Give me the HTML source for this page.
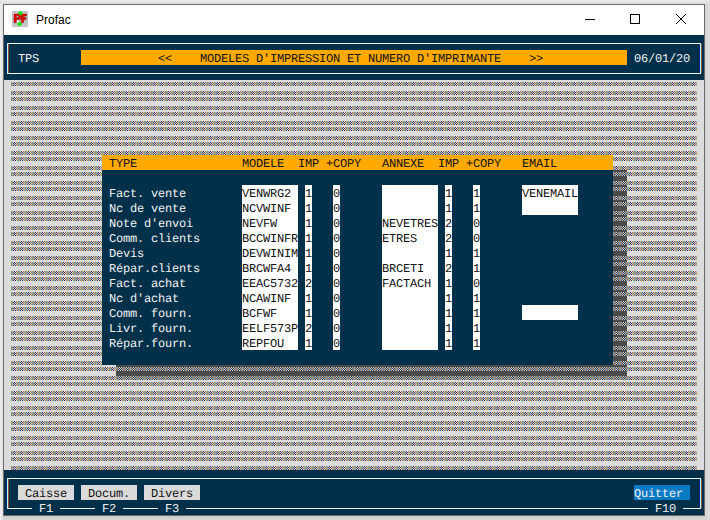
<!DOCTYPE html>
<html><head><meta charset="utf-8"><style>
html,body{margin:0;padding:0;}
body{width:710px;height:520px;position:relative;overflow:hidden;background:#eaeaea;}
.t{position:absolute;font-family:"Liberation Mono",monospace;font-size:12px;line-height:15px;white-space:pre;height:15px;letter-spacing:-0.2px;text-rendering:geometricPrecision;}
</style></head><body>
<div style="position:absolute;left:0;top:0;width:710px;height:4px;background:linear-gradient(to bottom,#eaeaea,#dddddd)"></div>
<div style="position:absolute;left:0;top:4px;width:3px;height:516px;background:linear-gradient(to right,#efefef,#e0e0e0)"></div>
<div style="position:absolute;left:705px;top:4px;width:5px;height:516px;background:linear-gradient(to right,#d2d2d2,#e0e0e0)"></div>
<div style="position:absolute;left:3px;top:516px;width:702px;height:4px;background:linear-gradient(to bottom,#cbcbcb,#d9d9d9)"></div>
<div style="position:absolute;left:3px;top:4px;width:700px;height:510px;border:1px solid #6b6b6b;background:#00304a"></div>
<div style="position:absolute;left:4px;top:5px;width:700px;height:30px;background:#fff"></div>
<svg width="16" height="16" style="position:absolute;left:12px;top:11px">
<rect x="0" y="0" width="16" height="16" fill="#c6c6c6"/>
<ellipse cx="8" cy="7.5" rx="7.5" ry="2.2" fill="none" stroke="#8a8a8a" stroke-width="0.5" opacity="0.7"/>
<path d="M2 3 H7.5 Q9 3 9 4.5 V7 Q9 8.5 7.5 8.5 H4.3 V11.8 H2 Z M4.3 4.8 V6.8 H6.6 V4.8 Z" fill="#f00000" stroke="#700000" stroke-width="0.4"/>
<path d="M9.3 3 H14.6 V5 H11.6 V6.5 H14 V8.4 H11.6 V11.8 H9.3 Z" fill="#f00000" stroke="#700000" stroke-width="0.4"/>
<rect x="5" y="9.5" width="2" height="2" fill="#ffffff"/>
<path d="M8.4 -0.2 L11 2.3 L8.4 4.8 L5.8 2.3 Z" fill="#10e010"/>
<path d="M7.6 10.4 L10.2 12.9 L7.6 15.4 L5 12.9 Z" fill="#10e010"/>
</svg>
<div style="position:absolute;left:36px;top:12px;font-family:'Liberation Sans',sans-serif;font-size:12px;line-height:16px;color:#000">Profac</div>
<svg width="710" height="30" style="position:absolute;left:0;top:5px">
<rect x="585" y="14" width="10" height="1" fill="#000"/>
<rect x="630.5" y="9.5" width="9" height="9" fill="none" stroke="#000" stroke-width="1"/>
<path d="M676 9 L686 19 M686 9 L676 19" stroke="#000" stroke-width="1" fill="none"/>
</svg>
<div style="position:absolute;left:4px;top:80px;width:700px;height:390px;background:#dcdcdc;"></div><svg width="710" height="520" style="position:absolute;left:0;top:0"><defs><pattern id="pl" x="4" y="35" width="7" height="15" patternUnits="userSpaceOnUse"><rect x="0" y="2" width="1" height="1" fill="#d7842a"/><rect x="1" y="2" width="1" height="1" fill="#5aa5e6"/><rect x="2" y="2" width="1" height="1" fill="#eec27a"/><rect x="3" y="2" width="1" height="1" fill="#2c2a86"/><rect x="4" y="2" width="1" height="1" fill="#eef2ee"/><rect x="5" y="2" width="1" height="1" fill="#b8643a"/><rect x="6" y="2" width="1" height="1" fill="#86cbe8"/><rect x="0" y="3" width="1" height="1" fill="#4f9fe6"/><rect x="1" y="3" width="1" height="1" fill="#e29a48"/><rect x="2" y="3" width="1" height="1" fill="#1a5caa"/><rect x="3" y="3" width="1" height="1" fill="#e6e2a2"/><rect x="4" y="3" width="1" height="1" fill="#5a0a6e"/><rect x="5" y="3" width="1" height="1" fill="#a6e6e2"/><rect x="6" y="3" width="1" height="1" fill="#d68838"/><rect x="0" y="4" width="1" height="1" fill="#d7842a"/><rect x="1" y="4" width="1" height="1" fill="#5aa5e6"/><rect x="2" y="4" width="1" height="1" fill="#eec27a"/><rect x="3" y="4" width="1" height="1" fill="#2c2a86"/><rect x="4" y="4" width="1" height="1" fill="#eef2ee"/><rect x="5" y="4" width="1" height="1" fill="#b8643a"/><rect x="6" y="4" width="1" height="1" fill="#86cbe8"/><rect x="0" y="5" width="1" height="1" fill="#4f9fe6"/><rect x="1" y="5" width="1" height="1" fill="#e29a48"/><rect x="2" y="5" width="1" height="1" fill="#1a5caa"/><rect x="3" y="5" width="1" height="1" fill="#e6e2a2"/><rect x="4" y="5" width="1" height="1" fill="#5a0a6e"/><rect x="5" y="5" width="1" height="1" fill="#a6e6e2"/><rect x="6" y="5" width="1" height="1" fill="#d68838"/><rect x="0" y="11" width="1" height="1" fill="#d7842a"/><rect x="1" y="11" width="1" height="1" fill="#5aa5e6"/><rect x="2" y="11" width="1" height="1" fill="#eec27a"/><rect x="3" y="11" width="1" height="1" fill="#2c2a86"/><rect x="4" y="11" width="1" height="1" fill="#eef2ee"/><rect x="5" y="11" width="1" height="1" fill="#b8643a"/><rect x="6" y="11" width="1" height="1" fill="#86cbe8"/><rect x="0" y="12" width="1" height="1" fill="#4f9fe6"/><rect x="1" y="12" width="1" height="1" fill="#e29a48"/><rect x="2" y="12" width="1" height="1" fill="#1a5caa"/><rect x="3" y="12" width="1" height="1" fill="#e6e2a2"/><rect x="4" y="12" width="1" height="1" fill="#5a0a6e"/><rect x="5" y="12" width="1" height="1" fill="#a6e6e2"/><rect x="6" y="12" width="1" height="1" fill="#d68838"/><rect x="0" y="13" width="1" height="1" fill="#d7842a"/><rect x="1" y="13" width="1" height="1" fill="#5aa5e6"/><rect x="2" y="13" width="1" height="1" fill="#eec27a"/><rect x="3" y="13" width="1" height="1" fill="#2c2a86"/><rect x="4" y="13" width="1" height="1" fill="#eef2ee"/><rect x="5" y="13" width="1" height="1" fill="#b8643a"/><rect x="6" y="13" width="1" height="1" fill="#86cbe8"/><rect x="0" y="14" width="1" height="1" fill="#4f9fe6"/><rect x="1" y="14" width="1" height="1" fill="#e29a48"/><rect x="2" y="14" width="1" height="1" fill="#1a5caa"/><rect x="3" y="14" width="1" height="1" fill="#e6e2a2"/><rect x="4" y="14" width="1" height="1" fill="#5a0a6e"/><rect x="5" y="14" width="1" height="1" fill="#a6e6e2"/><rect x="6" y="14" width="1" height="1" fill="#d68838"/></pattern><pattern id="ps" x="4" y="35" width="7" height="15" patternUnits="userSpaceOnUse"><rect x="0" y="2" width="1" height="1" fill="#5aa0d8"/><rect x="1" y="2" width="1" height="1" fill="#c8843a"/><rect x="2" y="2" width="1" height="1" fill="#3a5aa0"/><rect x="3" y="2" width="1" height="1" fill="#d8d8a0"/><rect x="4" y="2" width="1" height="1" fill="#303038"/><rect x="5" y="2" width="1" height="1" fill="#80c0e0"/><rect x="6" y="2" width="1" height="1" fill="#b86a3a"/><rect x="0" y="3" width="1" height="1" fill="#d08a3a"/><rect x="1" y="3" width="1" height="1" fill="#3a7ac0"/><rect x="2" y="3" width="1" height="1" fill="#e0b080"/><rect x="3" y="3" width="1" height="1" fill="#303080"/><rect x="4" y="3" width="1" height="1" fill="#a8d8b0"/><rect x="5" y="3" width="1" height="1" fill="#803838"/><rect x="6" y="3" width="1" height="1" fill="#60a0d8"/><rect x="0" y="4" width="1" height="1" fill="#5aa0d8"/><rect x="1" y="4" width="1" height="1" fill="#c8843a"/><rect x="2" y="4" width="1" height="1" fill="#3a5aa0"/><rect x="3" y="4" width="1" height="1" fill="#d8d8a0"/><rect x="4" y="4" width="1" height="1" fill="#303038"/><rect x="5" y="4" width="1" height="1" fill="#80c0e0"/><rect x="6" y="4" width="1" height="1" fill="#b86a3a"/><rect x="0" y="5" width="1" height="1" fill="#d08a3a"/><rect x="1" y="5" width="1" height="1" fill="#3a7ac0"/><rect x="2" y="5" width="1" height="1" fill="#e0b080"/><rect x="3" y="5" width="1" height="1" fill="#303080"/><rect x="4" y="5" width="1" height="1" fill="#a8d8b0"/><rect x="5" y="5" width="1" height="1" fill="#803838"/><rect x="6" y="5" width="1" height="1" fill="#60a0d8"/><rect x="0" y="11" width="1" height="1" fill="#5aa0d8"/><rect x="1" y="11" width="1" height="1" fill="#c8843a"/><rect x="2" y="11" width="1" height="1" fill="#3a5aa0"/><rect x="3" y="11" width="1" height="1" fill="#d8d8a0"/><rect x="4" y="11" width="1" height="1" fill="#303038"/><rect x="5" y="11" width="1" height="1" fill="#80c0e0"/><rect x="6" y="11" width="1" height="1" fill="#b86a3a"/><rect x="0" y="12" width="1" height="1" fill="#d08a3a"/><rect x="1" y="12" width="1" height="1" fill="#3a7ac0"/><rect x="2" y="12" width="1" height="1" fill="#e0b080"/><rect x="3" y="12" width="1" height="1" fill="#303080"/><rect x="4" y="12" width="1" height="1" fill="#a8d8b0"/><rect x="5" y="12" width="1" height="1" fill="#803838"/><rect x="6" y="12" width="1" height="1" fill="#60a0d8"/><rect x="0" y="13" width="1" height="1" fill="#5aa0d8"/><rect x="1" y="13" width="1" height="1" fill="#c8843a"/><rect x="2" y="13" width="1" height="1" fill="#3a5aa0"/><rect x="3" y="13" width="1" height="1" fill="#d8d8a0"/><rect x="4" y="13" width="1" height="1" fill="#303038"/><rect x="5" y="13" width="1" height="1" fill="#80c0e0"/><rect x="6" y="13" width="1" height="1" fill="#b86a3a"/><rect x="0" y="14" width="1" height="1" fill="#d08a3a"/><rect x="1" y="14" width="1" height="1" fill="#3a7ac0"/><rect x="2" y="14" width="1" height="1" fill="#e0b080"/><rect x="3" y="14" width="1" height="1" fill="#303080"/><rect x="4" y="14" width="1" height="1" fill="#a8d8b0"/><rect x="5" y="14" width="1" height="1" fill="#803838"/><rect x="6" y="14" width="1" height="1" fill="#60a0d8"/></pattern></defs><rect x="11" y="80" width="686" height="390" fill="url(#pl)"/></svg><svg width="710" height="520" style="position:absolute;left:0;top:0"><defs><pattern id="ps2" x="4" y="35" width="7" height="15" patternUnits="userSpaceOnUse"><rect x="0" y="2" width="1" height="1" fill="#5aa0d8"/><rect x="1" y="2" width="1" height="1" fill="#c8843a"/><rect x="2" y="2" width="1" height="1" fill="#3a5aa0"/><rect x="3" y="2" width="1" height="1" fill="#d8d8a0"/><rect x="4" y="2" width="1" height="1" fill="#303038"/><rect x="5" y="2" width="1" height="1" fill="#80c0e0"/><rect x="6" y="2" width="1" height="1" fill="#b86a3a"/><rect x="0" y="3" width="1" height="1" fill="#d08a3a"/><rect x="1" y="3" width="1" height="1" fill="#3a7ac0"/><rect x="2" y="3" width="1" height="1" fill="#e0b080"/><rect x="3" y="3" width="1" height="1" fill="#303080"/><rect x="4" y="3" width="1" height="1" fill="#a8d8b0"/><rect x="5" y="3" width="1" height="1" fill="#803838"/><rect x="6" y="3" width="1" height="1" fill="#60a0d8"/><rect x="0" y="4" width="1" height="1" fill="#5aa0d8"/><rect x="1" y="4" width="1" height="1" fill="#c8843a"/><rect x="2" y="4" width="1" height="1" fill="#3a5aa0"/><rect x="3" y="4" width="1" height="1" fill="#d8d8a0"/><rect x="4" y="4" width="1" height="1" fill="#303038"/><rect x="5" y="4" width="1" height="1" fill="#80c0e0"/><rect x="6" y="4" width="1" height="1" fill="#b86a3a"/><rect x="0" y="5" width="1" height="1" fill="#d08a3a"/><rect x="1" y="5" width="1" height="1" fill="#3a7ac0"/><rect x="2" y="5" width="1" height="1" fill="#e0b080"/><rect x="3" y="5" width="1" height="1" fill="#303080"/><rect x="4" y="5" width="1" height="1" fill="#a8d8b0"/><rect x="5" y="5" width="1" height="1" fill="#803838"/><rect x="6" y="5" width="1" height="1" fill="#60a0d8"/><rect x="0" y="11" width="1" height="1" fill="#5aa0d8"/><rect x="1" y="11" width="1" height="1" fill="#c8843a"/><rect x="2" y="11" width="1" height="1" fill="#3a5aa0"/><rect x="3" y="11" width="1" height="1" fill="#d8d8a0"/><rect x="4" y="11" width="1" height="1" fill="#303038"/><rect x="5" y="11" width="1" height="1" fill="#80c0e0"/><rect x="6" y="11" width="1" height="1" fill="#b86a3a"/><rect x="0" y="12" width="1" height="1" fill="#d08a3a"/><rect x="1" y="12" width="1" height="1" fill="#3a7ac0"/><rect x="2" y="12" width="1" height="1" fill="#e0b080"/><rect x="3" y="12" width="1" height="1" fill="#303080"/><rect x="4" y="12" width="1" height="1" fill="#a8d8b0"/><rect x="5" y="12" width="1" height="1" fill="#803838"/><rect x="6" y="12" width="1" height="1" fill="#60a0d8"/><rect x="0" y="13" width="1" height="1" fill="#5aa0d8"/><rect x="1" y="13" width="1" height="1" fill="#c8843a"/><rect x="2" y="13" width="1" height="1" fill="#3a5aa0"/><rect x="3" y="13" width="1" height="1" fill="#d8d8a0"/><rect x="4" y="13" width="1" height="1" fill="#303038"/><rect x="5" y="13" width="1" height="1" fill="#80c0e0"/><rect x="6" y="13" width="1" height="1" fill="#b86a3a"/><rect x="0" y="14" width="1" height="1" fill="#d08a3a"/><rect x="1" y="14" width="1" height="1" fill="#3a7ac0"/><rect x="2" y="14" width="1" height="1" fill="#e0b080"/><rect x="3" y="14" width="1" height="1" fill="#303080"/><rect x="4" y="14" width="1" height="1" fill="#a8d8b0"/><rect x="5" y="14" width="1" height="1" fill="#803838"/><rect x="6" y="14" width="1" height="1" fill="#60a0d8"/></pattern></defs><rect x="613" y="170" width="14" height="210" fill="#4b4b4b"/><rect x="116" y="365" width="497" height="15" fill="#4b4b4b"/><rect x="613" y="170" width="14" height="210" fill="url(#ps2)"/><rect x="116" y="365" width="497" height="15" fill="url(#ps2)"/></svg><div style="position:absolute;left:102px;top:155px;width:511px;height:15px;background:#ffaa00;"></div><div style="position:absolute;left:102px;top:170px;width:511px;height:195px;background:#00304a;"></div><div style="position:absolute;left:81px;top:50px;width:546px;height:15px;background:#ffaa00;"></div><div style="position:absolute;left:7px;top:43px;width:694px;height:1px;background:#f4f4f4;"></div><div style="position:absolute;left:6px;top:44px;width:1px;height:29px;background:#00288a;"></div><div style="position:absolute;left:8px;top:44px;width:1px;height:29px;background:#9a5040;"></div><div style="position:absolute;left:7px;top:43px;width:1px;height:31px;background:#b4ffea;"></div><div style="position:absolute;left:7px;top:43px;width:1px;height:1px;background:#f4f4f4;"></div><div style="position:absolute;left:7px;top:73px;width:1px;height:1px;background:#f4f4f4;"></div><div style="position:absolute;left:699px;top:44px;width:1px;height:29px;background:#00288a;"></div><div style="position:absolute;left:701px;top:44px;width:1px;height:29px;background:#9a5040;"></div><div style="position:absolute;left:700px;top:43px;width:1px;height:31px;background:#b4ffea;"></div><div style="position:absolute;left:700px;top:43px;width:1px;height:1px;background:#f4f4f4;"></div><div style="position:absolute;left:700px;top:73px;width:1px;height:1px;background:#f4f4f4;"></div><div style="position:absolute;left:7px;top:73px;width:694px;height:1px;background:#f4f4f4;"></div><div class="t" style="left:18px;top:51.5px;color:#f2f2f2">TPS</div><div class="t" style="left:158px;top:51.5px;color:#121212">&lt;&lt;    MODELES D'IMPRESSION ET NUMERO D'IMPRIMANTE    &gt;&gt;</div><div class="t" style="left:634px;top:51.5px;color:#f2f2f2">06/01/20</div><div class="t" style="left:109px;top:156.5px;color:#121212">TYPE</div><div class="t" style="left:242px;top:156.5px;color:#121212">MODELE</div><div class="t" style="left:298px;top:156.5px;color:#121212">IMP</div><div class="t" style="left:326px;top:156.5px;color:#121212">+COPY</div><div class="t" style="left:382px;top:156.5px;color:#121212">ANNEXE</div><div class="t" style="left:438px;top:156.5px;color:#121212">IMP</div><div class="t" style="left:466px;top:156.5px;color:#121212">+COPY</div><div class="t" style="left:522px;top:156.5px;color:#121212">EMAIL</div><div style="position:absolute;left:242px;top:185px;width:56px;height:165px;background:#ffffff;"></div><div style="position:absolute;left:305px;top:185px;width:7px;height:165px;background:#ffffff;"></div><div style="position:absolute;left:333px;top:185px;width:7px;height:165px;background:#ffffff;"></div><div style="position:absolute;left:382px;top:185px;width:56px;height:165px;background:#ffffff;"></div><div style="position:absolute;left:445px;top:185px;width:7px;height:165px;background:#ffffff;"></div><div style="position:absolute;left:473px;top:185px;width:7px;height:165px;background:#ffffff;"></div><div style="position:absolute;left:522px;top:185px;width:56px;height:30px;background:#ffffff;"></div><div style="position:absolute;left:522px;top:305px;width:56px;height:15px;background:#ffffff;"></div><div class="t" style="left:109px;top:186.5px;color:#f2f2f2">Fact. vente</div><div class="t" style="left:242px;top:186.5px;color:#121212">VENWRG2</div><div class="t" style="left:305px;top:186.5px;color:#121212">1</div><div class="t" style="left:333px;top:186.5px;color:#121212">0</div><div class="t" style="left:445px;top:186.5px;color:#121212">1</div><div class="t" style="left:473px;top:186.5px;color:#121212">1</div><div class="t" style="left:522px;top:186.5px;color:#121212">VENEMAIL</div><div class="t" style="left:109px;top:201.5px;color:#f2f2f2">Nc de vente</div><div class="t" style="left:242px;top:201.5px;color:#121212">NCVWINF</div><div class="t" style="left:305px;top:201.5px;color:#121212">1</div><div class="t" style="left:333px;top:201.5px;color:#121212">0</div><div class="t" style="left:445px;top:201.5px;color:#121212">1</div><div class="t" style="left:473px;top:201.5px;color:#121212">1</div><div class="t" style="left:109px;top:216.5px;color:#f2f2f2">Note d'envoi</div><div class="t" style="left:242px;top:216.5px;color:#121212">NEVFW</div><div class="t" style="left:305px;top:216.5px;color:#121212">1</div><div class="t" style="left:333px;top:216.5px;color:#121212">0</div><div class="t" style="left:382px;top:216.5px;color:#121212">NEVETRES</div><div class="t" style="left:445px;top:216.5px;color:#121212">2</div><div class="t" style="left:473px;top:216.5px;color:#121212">0</div><div class="t" style="left:109px;top:231.5px;color:#f2f2f2">Comm. clients</div><div class="t" style="left:242px;top:231.5px;color:#121212">BCCWINFR</div><div class="t" style="left:305px;top:231.5px;color:#121212">1</div><div class="t" style="left:333px;top:231.5px;color:#121212">0</div><div class="t" style="left:382px;top:231.5px;color:#121212">ETRES</div><div class="t" style="left:445px;top:231.5px;color:#121212">2</div><div class="t" style="left:473px;top:231.5px;color:#121212">0</div><div class="t" style="left:109px;top:246.5px;color:#f2f2f2">Devis</div><div class="t" style="left:242px;top:246.5px;color:#121212">DEVWINIM</div><div class="t" style="left:305px;top:246.5px;color:#121212">1</div><div class="t" style="left:333px;top:246.5px;color:#121212">0</div><div class="t" style="left:445px;top:246.5px;color:#121212">1</div><div class="t" style="left:473px;top:246.5px;color:#121212">1</div><div class="t" style="left:109px;top:261.5px;color:#f2f2f2">Répar.clients</div><div class="t" style="left:242px;top:261.5px;color:#121212">BRCWFA4</div><div class="t" style="left:305px;top:261.5px;color:#121212">1</div><div class="t" style="left:333px;top:261.5px;color:#121212">0</div><div class="t" style="left:382px;top:261.5px;color:#121212">BRCETI</div><div class="t" style="left:445px;top:261.5px;color:#121212">2</div><div class="t" style="left:473px;top:261.5px;color:#121212">1</div><div class="t" style="left:109px;top:276.5px;color:#f2f2f2">Fact. achat</div><div class="t" style="left:242px;top:276.5px;color:#121212">EEAC5732</div><div class="t" style="left:305px;top:276.5px;color:#121212">2</div><div class="t" style="left:333px;top:276.5px;color:#121212">0</div><div class="t" style="left:382px;top:276.5px;color:#121212">FACTACH</div><div class="t" style="left:445px;top:276.5px;color:#121212">1</div><div class="t" style="left:473px;top:276.5px;color:#121212">0</div><div class="t" style="left:109px;top:291.5px;color:#f2f2f2">Nc d'achat</div><div class="t" style="left:242px;top:291.5px;color:#121212">NCAWINF</div><div class="t" style="left:305px;top:291.5px;color:#121212">1</div><div class="t" style="left:333px;top:291.5px;color:#121212">0</div><div class="t" style="left:445px;top:291.5px;color:#121212">1</div><div class="t" style="left:473px;top:291.5px;color:#121212">1</div><div class="t" style="left:109px;top:306.5px;color:#f2f2f2">Comm. fourn.</div><div class="t" style="left:242px;top:306.5px;color:#121212">BCFWF</div><div class="t" style="left:305px;top:306.5px;color:#121212">1</div><div class="t" style="left:333px;top:306.5px;color:#121212">0</div><div class="t" style="left:445px;top:306.5px;color:#121212">1</div><div class="t" style="left:473px;top:306.5px;color:#121212">1</div><div class="t" style="left:109px;top:321.5px;color:#f2f2f2">Livr. fourn.</div><div class="t" style="left:242px;top:321.5px;color:#121212">EELF573P</div><div class="t" style="left:305px;top:321.5px;color:#121212">2</div><div class="t" style="left:333px;top:321.5px;color:#121212">0</div><div class="t" style="left:445px;top:321.5px;color:#121212">1</div><div class="t" style="left:473px;top:321.5px;color:#121212">1</div><div class="t" style="left:109px;top:336.5px;color:#f2f2f2">Répar.fourn.</div><div class="t" style="left:242px;top:336.5px;color:#121212">REPFOU</div><div class="t" style="left:305px;top:336.5px;color:#121212">1</div><div class="t" style="left:333px;top:336.5px;color:#121212">0</div><div class="t" style="left:445px;top:336.5px;color:#121212">1</div><div class="t" style="left:473px;top:336.5px;color:#121212">1</div><div style="position:absolute;left:4px;top:470px;width:700px;height:45px;background:#00304a;"></div><div style="position:absolute;left:7px;top:478px;width:694px;height:1px;background:#f4f4f4;"></div><div style="position:absolute;left:6px;top:479px;width:1px;height:29px;background:#00288a;"></div><div style="position:absolute;left:8px;top:479px;width:1px;height:29px;background:#9a5040;"></div><div style="position:absolute;left:7px;top:478px;width:1px;height:31px;background:#b4ffea;"></div><div style="position:absolute;left:7px;top:478px;width:1px;height:1px;background:#f4f4f4;"></div><div style="position:absolute;left:7px;top:508px;width:1px;height:1px;background:#f4f4f4;"></div><div style="position:absolute;left:699px;top:479px;width:1px;height:29px;background:#00288a;"></div><div style="position:absolute;left:701px;top:479px;width:1px;height:29px;background:#9a5040;"></div><div style="position:absolute;left:700px;top:478px;width:1px;height:31px;background:#b4ffea;"></div><div style="position:absolute;left:700px;top:478px;width:1px;height:1px;background:#f4f4f4;"></div><div style="position:absolute;left:700px;top:508px;width:1px;height:1px;background:#f4f4f4;"></div><div style="position:absolute;left:7px;top:508px;width:25px;height:1px;background:#f4f4f4;"></div><div style="position:absolute;left:60px;top:508px;width:35px;height:1px;background:#f4f4f4;"></div><div style="position:absolute;left:123px;top:508px;width:35px;height:1px;background:#f4f4f4;"></div><div style="position:absolute;left:186px;top:508px;width:462px;height:1px;background:#f4f4f4;"></div><div style="position:absolute;left:683px;top:508px;width:18px;height:1px;background:#f4f4f4;"></div><div class="t" style="left:39px;top:501.5px;color:#f2f2f2">F1</div><div class="t" style="left:102px;top:501.5px;color:#f2f2f2">F2</div><div class="t" style="left:165px;top:501.5px;color:#f2f2f2">F3</div><div class="t" style="left:655px;top:501.5px;color:#f2f2f2">F10</div><div style="position:absolute;left:18px;top:485px;width:56px;height:15px;background:#dadada;"></div><div style="position:absolute;left:81px;top:485px;width:56px;height:15px;background:#dadada;"></div><div style="position:absolute;left:144px;top:485px;width:56px;height:15px;background:#dadada;"></div><div style="position:absolute;left:634px;top:485px;width:56px;height:15px;background:#0a7ac4;"></div><div class="t" style="left:25px;top:486.5px;color:#121212">Caisse</div><div class="t" style="left:88px;top:486.5px;color:#121212">Docum.</div><div class="t" style="left:151px;top:486.5px;color:#121212">Divers</div><div class="t" style="left:634px;top:486.5px;color:#f2f2f2">Quitter</div>
</body></html>
